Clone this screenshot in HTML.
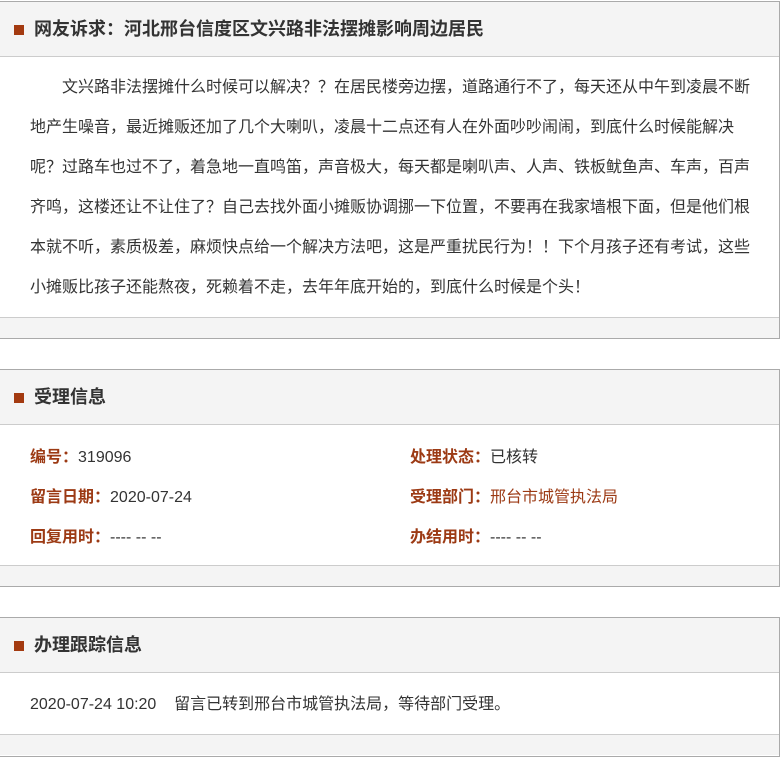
<!DOCTYPE html>
<html><head><meta charset="utf-8"><style>
*{margin:0;padding:0;box-sizing:border-box}
body{width:782px;height:744px;background:#fff;font-family:"Liberation Sans","Noto Sans CJK SC",sans-serif;color:#333;overflow:hidden;position:relative}
.p{position:absolute;left:-1px;width:781px;border:1px solid #aaa;background:#fff}
.h{height:55px;background:#f4f4f4;border-bottom:1px solid #ccc;position:relative;font-weight:bold;font-size:18px;line-height:55px;padding-left:34px;color:#333}
.h:before{content:"";position:absolute;left:14px;top:23px;width:10px;height:10px;background:#a33a10}
.f{height:21px;background:#f4f4f4;border-top:1px solid #ccc}
.txt{padding:11px 29px 0 30px;font-size:16px;line-height:40px;text-indent:32px;height:260px}
.row{position:absolute;font-size:16px;line-height:20px}
.l{color:#9c3a14;font-weight:bold}
.b{color:#9c3a14}
</style></head><body>
<div class="p" style="top:1px;height:338px">
<div class="h">网友诉求：河北邢台信度区文兴路非法摆摊影响周边居民</div>
<div class="txt">文兴路非法摆摊什么时候可以解决？？在居民楼旁边摆，道路通行不了，每天还从中午到凌晨不断地产生噪音，最近摊贩还加了几个大喇叭，凌晨十二点还有人在外面吵吵闹闹，到底什么时候能解决呢？过路车也过不了，着急地一直鸣笛，声音极大，每天都是喇叭声、人声、铁板鱿鱼声、车声，百声齐鸣，这楼还让不让住了？自己去找外面小摊贩协调挪一下位置，不要再在我家墙根下面，但是他们根本就不听，素质极差，麻烦快点给一个解决方法吧，这是严重扰民行为！！下个月孩子还有考试，这些小摊贩比孩子还能熬夜，死赖着不走，去年年底开始的，到底什么时候是个头！</div>
<div class="f" style="position:absolute;left:0;right:0;top:315px"></div>
</div>
<div class="p" style="top:369px;height:218px">
<div class="h">受理信息</div>
<div class="row" style="left:30px;top:78px"><span class="l">编号：</span>319096</div>
<div class="row" style="left:410px;top:78px"><span class="l">处理状态：</span>已核转</div>
<div class="row" style="left:30px;top:118px"><span class="l">留言日期：</span>2020-07-24</div>
<div class="row" style="left:410px;top:118px"><span class="l">受理部门：</span><span class="b">邢台市城管执法局</span></div>
<div class="row" style="left:30px;top:158px"><span class="l">回复用时：</span>---- -- --</div>
<div class="row" style="left:410px;top:158px"><span class="l">办结用时：</span>---- -- --</div>
<div class="f" style="position:absolute;left:0;right:0;top:195px"></div>
</div>
<div class="p" style="top:617px;height:140px">
<div class="h">办理跟踪信息</div>
<div class="row" style="left:30px;top:77px">2020-07-24 10:20&nbsp;&nbsp;&nbsp; 留言已转到邢台市城管执法局，等待部门受理。</div>
<div class="f" style="position:absolute;left:0;right:0;top:116px"></div>
</div>
</body></html>
